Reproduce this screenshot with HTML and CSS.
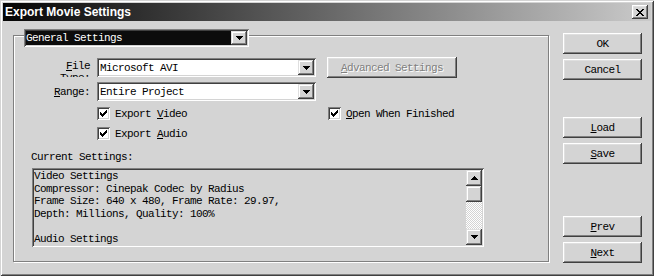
FILE: index.html
```html
<!DOCTYPE html>
<html lang="en">
<head>
    <meta charset="UTF-8">
    <title>Export Movie Settings</title>
    <link rel="stylesheet" href="styles.css">
</head>
<body>
    <div class="window">
        <div class="titlebar">
            <span class="title">Export Movie Settings</span>
            <span class="close-btn">
                <svg width="8" height="7" viewBox="0 0 8 7" shape-rendering="crispEdges"><path d="M0 0h2v1h-2zM6 0h2v1h-2zM1 1h2v1h-2zM5 1h2v1h-2zM2 2h4v1h-4zM3 3h2v1h-2zM2 4h4v1h-4zM1 5h2v1h-2zM5 5h2v1h-2zM0 6h2v1h-2zM6 6h2v1h-2z" fill="#000"/></svg>
            </span>
        </div>

        <div class="dialog">
            <div class="group">
                <div class="combo combo-dark group-head">
                    <span class="combo-text">General Settings</span>
                    <span class="combo-btn">
                        <svg width="7" height="4" viewBox="0 0 7 4" shape-rendering="crispEdges"><path d="M0 0h7v1h-1v1h-1v1h-1v1h-1v-1h-1v-1h-1v-1h-1z" fill="#000"/></svg>
                    </span>
                </div>

                <div class="form">
                    <div class="label label-file"><span><u>F</u>ile<br>Type:</span></div>
                    <div class="combo">
                        <span class="combo-text">Microsoft AVI</span>
                        <span class="combo-btn">
                            <svg width="7" height="4" viewBox="0 0 7 4" shape-rendering="crispEdges"><path d="M0 0h7v1h-1v1h-1v1h-1v1h-1v-1h-1v-1h-1v-1h-1z" fill="#000"/></svg>
                        </span>
                    </div>
                    <div class="btn btn-disabled adv-btn"><span><u>A</u>dvanced Settings</span></div>

                    <div class="label"><span><u>R</u>ange:</span></div>
                    <div class="combo">
                        <span class="combo-text">Entire Project</span>
                        <span class="combo-btn">
                            <svg width="7" height="4" viewBox="0 0 7 4" shape-rendering="crispEdges"><path d="M0 0h7v1h-1v1h-1v1h-1v1h-1v-1h-1v-1h-1v-1h-1z" fill="#000"/></svg>
                        </span>
                    </div>

                    <div class="check check-mid">
                        <span class="check-box"><svg width="7" height="7" viewBox="0 0 7 7" shape-rendering="crispEdges"><path d="M0 2h1v3h-1zM1 3h1v3h-1zM2 4h1v3h-1zM3 3h1v3h-1zM4 2h1v3h-1zM5 1h1v3h-1zM6 0h1v3h-1z" fill="#000"/></svg></span>
                        <span>Export <u>V</u>ideo</span>
                    </div>
                    <div class="check check-right">
                        <span class="check-box"><svg width="7" height="7" viewBox="0 0 7 7" shape-rendering="crispEdges"><path d="M0 2h1v3h-1zM1 3h1v3h-1zM2 4h1v3h-1zM3 3h1v3h-1zM4 2h1v3h-1zM5 1h1v3h-1zM6 0h1v3h-1z" fill="#000"/></svg></span>
                        <span><u>O</u>pen When Finished</span>
                    </div>
                    <div class="check check-mid">
                        <span class="check-box"><svg width="7" height="7" viewBox="0 0 7 7" shape-rendering="crispEdges"><path d="M0 2h1v3h-1zM1 3h1v3h-1zM2 4h1v3h-1zM3 3h1v3h-1zM4 2h1v3h-1zM5 1h1v3h-1zM6 0h1v3h-1z" fill="#000"/></svg></span>
                        <span>Export <u>A</u>udio</span>
                    </div>
                </div>

                <div class="settings-label">Current Settings:</div>
                <div class="settings-box">
                    <div class="settings-text">Video Settings
Compressor: Cinepak Codec by Radius
Frame Size: 640 x 480, Frame Rate: 29.97,
Depth: Millions, Quality: 100%

Audio Settings</div>
                    <div class="scrollbar">
                        <span class="sb-btn">
                            <svg width="7" height="4" viewBox="0 0 7 4" shape-rendering="crispEdges"><path d="M3 0h1v1h1v1h1v1h1v1h-7v-1h1v-1h1v-1h1z" fill="#000"/></svg>
                        </span>
                        <span class="sb-thumb"></span>
                        <span class="sb-track"></span>
                        <span class="sb-btn">
                            <svg width="7" height="4" viewBox="0 0 7 4" shape-rendering="crispEdges"><path d="M0 0h7v1h-1v1h-1v1h-1v1h-1v-1h-1v-1h-1v-1h-1z" fill="#000"/></svg>
                        </span>
                    </div>
                </div>
            </div>

            <div class="buttons">
                <div class="btn">OK</div>
                <div class="btn">Cancel</div>
                <div class="btn btn-gap"><span><u>L</u>oad</span></div>
                <div class="btn"><span><u>S</u>ave</span></div>
                <div class="btn btn-gap-lg"><span><u>P</u>rev</span></div>
                <div class="btn"><span><u>N</u>ext</span></div>
            </div>
        </div>
    </div>
</body>
</html>
```

FILE: styles.css
```css
body {
    margin: 0;
    background-color: #d4d4d4;
    font-family: 'Liberation Mono', 'DejaVu Sans Mono', monospace;
    font-size: 11px;
    letter-spacing: -0.6px;
    color: #000;
}

u {
    text-underline-offset: 1px;
}

.window {
    width: 654px;
    height: 276px;
    box-sizing: border-box;
    padding: 3px;
    background-color: #d4d4d4;
    box-shadow: inset 1px 1px #d4d4d4, inset -1px -1px #404040,
                inset 2px 2px #fff, inset -2px -2px #808080;
    display: flex;
    flex-direction: column;
}

.titlebar {
    height: 18px;
    display: flex;
    align-items: center;
    justify-content: space-between;
    padding: 0 3px 0 2px;
    background: linear-gradient(to right, #050505, #cacaca);
}

.title {
    font-family: 'Liberation Sans', Arial, sans-serif;
    font-weight: bold;
    font-size: 12px;
    letter-spacing: 0;
    color: #fff;
}

.close-btn {
    width: 16px;
    height: 14px;
    display: flex;
    align-items: center;
    justify-content: center;
    background-color: #d4d4d4;
    box-shadow: inset -1px -1px #404040, inset 1px 1px #fff,
                inset -2px -2px #808080, inset 2px 2px #dfdfdf;
}

.dialog {
    display: flex;
    padding: 12px 0 0 10px;
}

/* group box */
.group {
    width: 536px;
    height: 227px;
    box-sizing: border-box;
    margin-top: 2px;
    border: 1px solid #808080;
    box-shadow: inset 1px 1px #fff, 1px 1px #fff;
}

/* combo box */
.combo {
    display: flex;
    box-sizing: border-box;
    width: 219px;
    height: 19px;
    padding: 2px;
    background-color: #fff;
    box-shadow: inset 1px 1px #808080, inset -1px -1px #fff,
                inset 2px 2px #404040, inset -2px -2px #d4d4d4;
}

.combo.group-head {
    margin: -7px 0 0 10px;
    width: 225px;
    height: 18px;
}

.combo-text {
    flex: 1;
    display: flex;
    align-items: center;
    padding-left: 1px;
    white-space: nowrap;
}

.combo-dark .combo-text {
    background-color: #0c0c0c;
    color: #fff;
    padding-left: 0;
}

.combo-btn {
    width: 16px;
    display: flex;
    align-items: center;
    justify-content: center;
    background-color: #d4d4d4;
    box-shadow: inset -1px -1px #404040, inset 1px 1px #dfdfdf,
                inset -2px -2px #808080, inset 2px 2px #fff;
}

/* form rows */
.form {
    display: grid;
    grid-template-columns: 83px 230px 131px;
    grid-template-rows: 19px 19px 14px 15px;
    row-gap: 5px;
    margin-top: 11px;
}

.label {
    display: flex;
    align-items: center;
    justify-content: flex-end;
    padding-right: 7px;
    text-align: right;
}

.label-file {
    align-items: flex-start;
    padding-top: 2px;
    line-height: 12px;
    overflow: hidden;
}

.adv-btn {
    width: 130px;
    height: 19px;
    margin-top: -1px;
}

.check {
    display: flex;
    align-items: center;
    gap: 5px;
    height: 13px;
    align-self: end;
    white-space: nowrap;
}

.check-mid {
    grid-column: 2;
}

.check-right {
    grid-column: 3;
    margin-left: 1px;
}

.check-box {
    width: 13px;
    height: 13px;
    display: flex;
    align-items: center;
    justify-content: center;
    background-color: #fff;
    box-shadow: inset 1px 1px #808080, inset -1px -1px #fff,
                inset 2px 2px #404040, inset -2px -2px #d4d4d4;
}

/* current settings */
.settings-label {
    margin: 11px 0 0 17px;
    line-height: 12px;
}

.settings-box {
    display: flex;
    box-sizing: border-box;
    width: 452px;
    height: 79px;
    margin: 5px 0 0 18px;
    padding: 2px;
    box-shadow: inset 1px 1px #808080, inset -1px -1px #fff,
                inset 2px 2px #404040, inset -2px -2px #d4d4d4;
}

.settings-text {
    flex: 1;
    white-space: pre;
    line-height: 12.5px;
    overflow: hidden;
}

.scrollbar {
    width: 16px;
    display: flex;
    flex-direction: column;
}

.sb-btn, .sb-thumb {
    height: 16px;
    display: flex;
    align-items: center;
    justify-content: center;
    background-color: #d4d4d4;
    box-shadow: inset -1px -1px #404040, inset 1px 1px #dfdfdf,
                inset -2px -2px #808080, inset 2px 2px #fff;
}

.sb-track {
    flex: 1;
    background-image: conic-gradient(#fff 25%, #d4d4d4 0 50%, #fff 0 75%, #d4d4d4 0);
    background-size: 2px 2px;
}

/* buttons */
.buttons {
    display: flex;
    flex-direction: column;
    gap: 5px;
    width: 79px;
    margin-left: 14px;
}

.btn {
    height: 21px;
    box-sizing: border-box;
    display: flex;
    align-items: center;
    justify-content: center;
    background-color: #d4d4d4;
    box-shadow: inset -1px -1px #404040, inset 1px 1px #fff,
                inset -2px -2px #808080, inset 2px 2px #dfdfdf;
    white-space: nowrap;
}

.btn-gap {
    margin-top: 32px;
}

.btn-gap-lg {
    margin-top: 47px;
}

.btn-disabled {
    color: #808080;
    text-shadow: 1px 1px #fff;
}
```
